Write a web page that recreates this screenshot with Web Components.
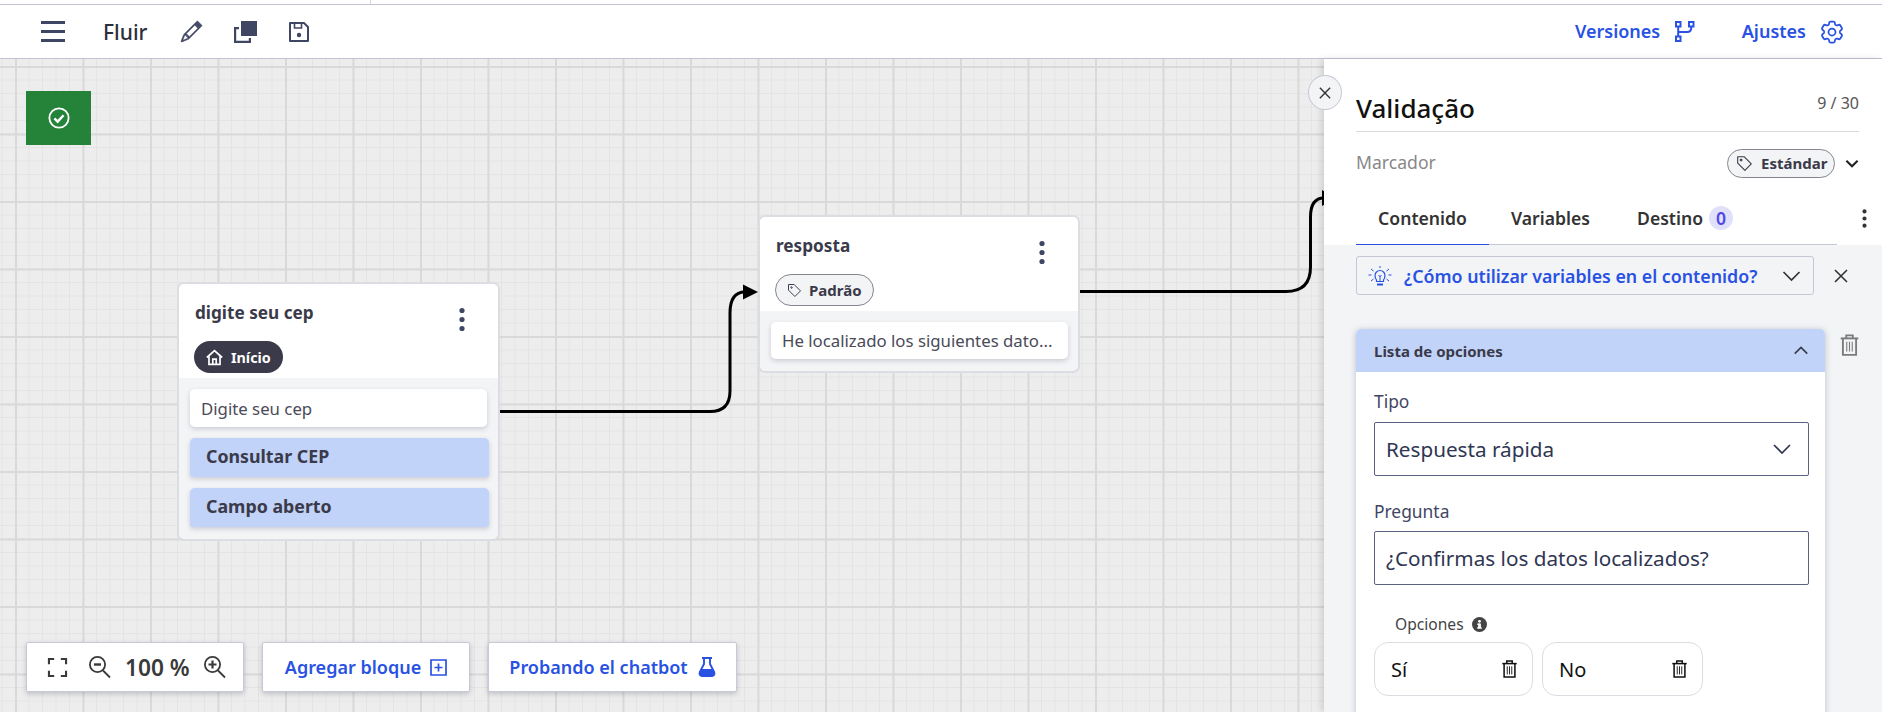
<!DOCTYPE html>
<html lang="es">
<head>
<meta charset="utf-8">
<title>Fluir</title>
<style>
    html, body { margin: 0; height: 100%; overflow: hidden; }
    body { font-family: "Noto Sans", "Liberation Sans", sans-serif; }
</style>
</head>
<body>
<flow-app></flow-app>

<script>
const ICONS = {
    pencil: `<svg viewBox="0 0 16 16" fill="currentColor" stroke="currentColor" stroke-width=".35"><path d="M12.146.146a.5.5 0 0 1 .708 0l3 3a.5.5 0 0 1 0 .708l-10 10a.5.5 0 0 1-.168.11l-5 2a.5.5 0 0 1-.65-.65l2-5a.5.5 0 0 1 .11-.168l10-10zM11.207 2.5 13.5 4.793 14.793 3.5 12.5 1.207 11.207 2.5zm1.586 3L10.5 3.207 4 9.707V10h.5a.5.5 0 0 1 .5.5v.5h.5a.5.5 0 0 1 .5.5v.5h.293l6.5-6.5zm-9.761 5.175-.106.106-1.528 3.821 3.821-1.528.106-.106A.5.5 0 0 1 5 12.5V12h-.5a.5.5 0 0 1-.5-.5V11h-.5a.5.5 0 0 1-.468-.325z"/><path d="M11.200 2.500 12.500 1.200 14.800 3.500 13.500 4.800z"/></svg>`,
    copy: `<svg viewBox="0 0 23 22" fill="currentColor"><path d="M7 0h16v15H7z"/><path d="M0 6h5v2.200H2.200v11.600h12.600V17H17v5H0z"/></svg>`,
    save: `<svg viewBox="0 0 20 20" fill="none" stroke="currentColor" stroke-width="2"><path d="M1 1h14l4 4v14H1z" stroke-linejoin="round"/><path d="M5.500 1v5h7V1" stroke-width="1.600"/><circle cx="10" cy="13" r="2.200" fill="currentColor" stroke="none"/></svg>`,
    branch: `<svg viewBox="0 0 19.500 21" fill="none" stroke="currentColor" stroke-width="2"><rect x="1" y="1" width="4.500" height="4.500"/><rect x="14" y="1" width="4.500" height="4.500"/><rect x="1" y="15.500" width="4.500" height="4.500"/><path d="M3.200 5.500v10M16.200 5.500v1.500q0 4-4 4H3.200"/></svg>`,
    gear: `<svg viewBox="0 0 24 24" fill="none" stroke="currentColor" stroke-width="1.500"><path d="M9.594 3.940c.09-.542.56-.94 1.110-.94h2.593c.55 0 1.020.398 1.110.94l.213 1.281c.063.374.313.686.645.870.074.040.147.083.22.127.324.196.72.257 1.075.124l1.217-.456a1.125 1.125 0 011.370.49l1.296 2.247a1.125 1.125 0 01-.26 1.431l-1.003.827c-.293.24-.438.613-.431.992a6.759 6.759 0 010 .255c-.007.378.138.75.43.99l1.005.828c.424.35.534.954.26 1.430l-1.298 2.247a1.125 1.125 0 01-1.369.491l-1.217-.456c-.355-.133-.75-.072-1.076.124a6.570 6.570 0 01-.22.128c-.331.183-.581.495-.644.869l-.213 1.280c-.09.543-.56.941-1.110.941h-2.594c-.55 0-1.020-.398-1.110-.94l-.213-1.281c-.062-.374-.312-.686-.644-.87a6.520 6.520 0 01-.22-.127c-.325-.196-.72-.257-1.076-.124l-1.217.456a1.125 1.125 0 01-1.369-.49l-1.297-2.247a1.125 1.125 0 01.26-1.431l1.004-.827c.292-.24.437-.613.43-.992a6.932 6.932 0 010-.255c.007-.378-.138-.75-.43-.99l-1.004-.828a1.125 1.125 0 01-.26-1.430l1.297-2.247a1.125 1.125 0 011.370-.491l1.216.456c.356.133.751.072 1.076-.124.072-.044.146-.087.22-.128.332-.183.582-.495.644-.869l.214-1.281z"/><circle cx="12" cy="12" r="3"/></svg>`,
    check: `<svg viewBox="0 0 24 24" fill="none" stroke="currentColor"><circle cx="12" cy="12" r="10.500" stroke-width="2"/><path d="M7 12.500l3.500 3.500L17 9" stroke-width="2.600"/></svg>`,
    dots: `<svg viewBox="0 0 6 24" fill="currentColor"><circle cx="3" cy="3" r="2.600"/><circle cx="3" cy="12" r="2.600"/><circle cx="3" cy="21" r="2.600"/></svg>`,
    home: `<svg viewBox="0 0 20 20" fill="none" stroke="currentColor" stroke-width="2"><path d="M1 10 10 2l9 8"/><path d="M3.500 8.500V18h13V8.500"/><path d="M8 18v-6h4v6"/></svg>`,
    tag: `<svg viewBox="0 0 20 20" fill="none" stroke="currentColor" stroke-width="1.300"><path d="M2 2h7.500l8.500 8.500-7.500 7.500L2 9.500z" stroke-linejoin="round"/><circle cx="6" cy="6" r="1"/></svg>`,
    fit: `<svg viewBox="0 0 20 20" fill="none" stroke="currentColor" stroke-width="2.200"><path d="M1 6.500V1h5.500M13.500 1H19v5.500M19 13.500V19h-5.500M6.500 19H1v-5.500"/></svg>`,
    zoomOut: `<svg viewBox="0 0 22 22" fill="none" stroke="currentColor" stroke-width="1.800"><circle cx="8.500" cy="8.500" r="7.600"/><path d="M14 14.500l7 7"/><path d="M5 8.500h7" stroke-width="2.400"/></svg>`,
    zoomIn: `<svg viewBox="0 0 22 22" fill="none" stroke="currentColor" stroke-width="1.800"><circle cx="8.500" cy="8.500" r="7.600"/><path d="M14 14.500l7 7"/><path d="M4.500 8.500h8M8.500 4.500v8" stroke-width="2.200"/></svg>`,
    plusBox: `<svg viewBox="0 0 17 17" fill="none" stroke="currentColor" stroke-width="1.700"><path d="M1 1h15v15H1z"/><path d="M8.500 4.500v8M4.500 8.500h8"/></svg>`,
    flask: `<svg viewBox="0 0 18 20" fill="none" stroke="currentColor" stroke-width="1.900"><path d="M4 1h10M6 1v6L1.800 15q-1 3.800 2.700 4h9q3.700-.2 2.700-4L12 7V1"/><path d="M3 12h12l2 4-2 3.500H3L1 16z" fill="currentColor" stroke="none"/></svg>`,
    close: `<svg viewBox="0 0 14 14" fill="none" stroke="currentColor" stroke-width="1.600"><path d="M1 1l12 12M13 1 1 13"/></svg>`,
    down: `<svg viewBox="0 0 18 10" fill="none" stroke="currentColor" style="stroke-width:var(--sw,1.700)"><path d="M1 1l8 8 8-8"/></svg>`,
    up: `<svg viewBox="0 0 18 10" fill="none" stroke="currentColor" stroke-width="2.200"><path d="M1 9l8-8 8 8"/></svg>`,
    bulb: `<svg viewBox="0 0 24 20" fill="none" stroke="currentColor" stroke-width="1.200"><path d="M8.500 14Q7 12 7 9.500a5 5 0 0 1 10 0q0 2.500-1.500 4.500v1.500h-7z"/><path d="M9 18.500h6" stroke-width="2"/><path d="M12 10v5M10.500 9 12 10.500 13.500 9M.5 9h3M20.500 9h3M3 3l2.500 2M21 3l-2.500 2M3 15l2.500-2M21 15l-2.500-2M12 0v2" stroke-width="1"/></svg>`,
    trash: `<svg viewBox="0 0 16 20" fill="none" stroke="currentColor" stroke-width="1.700"><path d="M0 4h16"/><path d="M5 4V1.200h6V4"/><path d="M2 4v15h12V4"/><path d="M5.500 7v9M8 7v9M10.500 7v9" stroke-width="1"/></svg>`,
    info: `<svg viewBox="0 0 16 16"><circle cx="8" cy="8" r="8" fill="currentColor"/><rect x="6.500" y="7" width="3" height="5" fill="#fff"/><rect x="5.500" y="11" width="5" height="1.500" fill="#fff"/><rect x="5.500" y="7" width="3" height="1.300" fill="#fff"/><circle cx="8" cy="4.600" r="1.500" fill="#fff"/></svg>`
};


class AppIcon extends HTMLElement {
    constructor() {
        super();
        this.attachShadow({ mode: 'open' }).innerHTML = `
            <style>
                :host { display: inline-flex; flex: none; width: var(--w, 20px); height: var(--h, 20px); }
                svg { display: block; width: 100%; height: 100%; overflow: visible; }
            </style>
            ${ICONS[this.getAttribute('name')] || ''}
        `;
    }
}


class AppHeader extends HTMLElement {
    constructor() {
        super();
        this.attachShadow({ mode: 'open' }).innerHTML = `
            <style>
                :host {
                    display: flex;
                    align-items: center;
                    height: 53px;
                    padding: 0 36px 0 41px;
                    background: #fff;
                    border-bottom: 1px solid #c3c3d6;
                    color: #3f4663;
                }

                .burger { display: flex; flex-direction: column; gap: 6.500px; width: 24px; margin-right: 38px; }
                .burger i { height: 2.500px; background: currentColor; }
                .name { font-size: 21px; font-weight: 500; color: #2b2f3a; margin-right: 34px; width: 44px; }
                .tools { display: flex; align-items: center; gap: 32px; }
                .right { margin-left: auto; display: flex; align-items: center; color: #2952e3; font-size: 18px; font-weight: 600; }
                .right span { padding-bottom: 2px; }
                .right .a { margin-right: 15px; }
                .right .b { margin: 0 12px 0 47px; }
            </style>
            <div class="burger"><i></i><i></i><i></i></div>
            <span class="name">Fluir</span>
            <div class="tools">
                <app-icon name="pencil" style="--w:21px;--h:21px"></app-icon>
                <app-icon name="copy" style="--w:23px;--h:22px"></app-icon>
                <app-icon name="save" style="--w:20px;--h:20px"></app-icon>
            </div>
            <div class="right">
                <span class="a">Versiones</span><app-icon name="branch" style="--w:19.500px;--h:21px"></app-icon>
                <span class="b">Ajustes</span><app-icon name="gear" style="--w:28px;--h:28px"></app-icon>
            </div>
        `;
    }
}


class FlowNode extends HTMLElement {
    constructor() {
        super();
        this.attachShadow({ mode: 'open' }).innerHTML = `
            <style>
                :host {
                    position: absolute;
                    box-sizing: border-box;
                    background: #f3f4f6;
                    border: 2px solid #dcdde3;
                    border-radius: 7px;
                    color: #3a3a4a;
                }

                .top { background: #fff; border-radius: 5px 5px 0 0; box-sizing: border-box; padding: 17px 16px 0; position: relative; height: 94px; }
                .title { font-size: 17.200px; font-weight: 700; line-height: 24px; }
                .dots { position: absolute; top: 22px; right: 33px; color: #3f4663; }
                .badge { position: absolute; left: 15px; top: 57px; }
                .body { display: flex; flex-direction: column; gap: 11px; padding: 11px 11px 12px; }
            </style>
            <div class="top">
                <div class="title"></div>
                <app-icon class="dots" name="dots" style="--w:6px;--h:27px"></app-icon>
                <div class="badge"><slot name="badge"></slot></div>
            </div>
            <div class="body"><slot></slot></div>
        `;
        this.shadowRoot.querySelector('.title').textContent = this.getAttribute('title-text');
    }
}


class NodeBadge extends HTMLElement {
    constructor() {
        super();
        this.attachShadow({ mode: 'open' }).innerHTML = `
            <style>
                :host {
                    display: inline-flex;
                    align-items: center;
                    gap: 7px;
                    box-sizing: border-box;
                    height: 32px;
                    padding: 0 11px;
                    border-radius: 16px;
                    font-size: 15px;
                    font-weight: 700;
                    color: #3a3a4a;
                    background: #f3f4f6;
                    border: 1px solid #85858f;
                }

                :host([dark]) { background: #3a3a4a; color: #fff; border: 0; font-size: 14.300px; gap: 8px; padding: 0 12px; }
            </style>
            <app-icon name="${this.getAttribute('icon')}" style="--w:${this.hasAttribute('dark') ? 17 : 15}px;--h:${this.hasAttribute('dark') ? 17 : 15}px"></app-icon>
            <slot></slot>
        `;
    }
}


class NodeRow extends HTMLElement {
    constructor() {
        super();
        this.attachShadow({ mode: 'open' }).innerHTML = `
            <style>
                :host {
                    display: flex;
                    align-items: center;
                    box-sizing: border-box;
                    width: 297px;
                    height: 38px;
                    padding: 0 11px;
                    background: #fff;
                    border-radius: 5px;
                    box-shadow: 0 2px 5px rgba(60, 64, 90, .22);
                    font-size: 16.800px;
                    color: #4a4a58;
                    white-space: nowrap;
                }

                :host([short]) { height: 37px; }

                :host([option]) {
                    height: 39px;
                    width: 299px;
                    padding: 0 16px 4px;
                    background: #c1d3f8;
                    font-size: 17.800px;
                    font-weight: 700;
                    color: #3a3a4a;
                    border-radius: 5px 5px 3px 3px;
                }
            </style>
            <slot></slot>
        `;
    }
}


class ToolCard extends HTMLElement {
    constructor() {
        super();
        this.attachShadow({ mode: 'open' }).innerHTML = `
            <style>
                :host {
                    display: flex;
                    align-items: center;
                    justify-content: center;
                    box-sizing: border-box;
                    height: 50px;
                    background: #fff;
                    border: 1px solid #c8c9d6;
                    border-radius: 2px;
                    box-shadow: 0 2px 5px rgba(60, 64, 90, .25);
                    color: #2952e3;
                    font-size: 18px;
                    font-weight: 600;
                    gap: 9px;
                }
            </style>
            <slot></slot>
        `;
    }
}


class FlowCanvas extends HTMLElement {
    constructor() {
        super();
        this.attachShadow({ mode: 'open' }).innerHTML = `
            <style>
                :host {
                    display: block;
                    position: relative;
                    flex: 1;
                    overflow: hidden;
                    background-color: #ededed;
                    background-image:
                        linear-gradient(#d9d9d9 2px, transparent 2px),
                        linear-gradient(90deg, #d9d9d9 2px, transparent 2px),
                        linear-gradient(#e4e4e4 1px, transparent 1px),
                        linear-gradient(90deg, #e4e4e4 1px, transparent 1px);
                    background-size: 67.500px 67.500px, 67.500px 67.500px, 13.500px 13.500px, 13.500px 13.500px;
                    background-position: 0 7px, 15px 0, 0 7px, 15px 0;
                }

                .status {
                    position: absolute;
                    left: 26px;
                    top: 32px;
                    width: 65px;
                    height: 54px;
                    display: flex;
                    align-items: center;
                    justify-content: center;
                    background: #248338;
                    color: #fff;
                }

                svg.wires { position: absolute; inset: 0; width: 100%; height: 100%; }

                .controls {
                    position: absolute;
                    left: 26px;
                    top: 583px;
                    display: flex;
                    gap: 18px;
                    color: #3a3a3a;
                }

                .zoom { width: 218px; color: #3a3a3a; font-size: 22.700px; gap: 0; justify-content: flex-start; padding-left: 21px; }
                .zoom b { font-weight: 600; margin: 0 14px; }
                .zoom app-icon:first-child { margin-right: 22px; }
                .add { width: 208px; }
                .test { width: 249px; gap: 10px; }
            </style>
            <div class="status"><app-icon name="check" style="--w:22px;--h:22px"></app-icon></div>
            <svg class="wires" fill="none" stroke="#000" stroke-width="3">
                <path d="M500 352.500H710Q730 352.500 730 332V254Q730 233 745 233"/>
                <path d="M743 225.500 758 233 743 240.500z" fill="#000" stroke="none"/>
                <path d="M1080 232.500H1286Q1310.500 232.500 1310.500 208V158Q1310.500 139 1324 139"/>
                <path d="M1322 131 1336 139 1322 147z" fill="#000" stroke="none"/>
            </svg>
            <slot></slot>
            <div class="controls">
                <tool-card class="zoom">
                    <app-icon name="fit" style="--w:19px;--h:19px"></app-icon>
                    <app-icon name="zoomOut" style="--w:22px;--h:22px"></app-icon>
                    <b>100 %</b>
                    <app-icon name="zoomIn" style="--w:22px;--h:22px"></app-icon>
                </tool-card>
                <tool-card class="add">Agregar bloque <app-icon name="plusBox" style="--w:17px;--h:17px"></app-icon></tool-card>
                <tool-card class="test">Probando el chatbot <app-icon name="flask" style="--w:18px;--h:20px"></app-icon></tool-card>
            </div>
        `;
    }
}


class FormField extends HTMLElement {
    constructor() {
        super();
        const isSelect = this.hasAttribute('select');
        this.attachShadow({ mode: 'open' }).innerHTML = `
            <style>
                :host { display: block; color: #3f4663; }
                .label { font-size: 17.400px; line-height: 24px; margin-bottom: 8px; }
                :host([select]) .label { margin-bottom: 9px; }
                .box {
                    display: flex;
                    align-items: center;
                    justify-content: space-between;
                    box-sizing: border-box;
                    height: 54px;
                    padding: 0 17px 0 11px;
                    border: 1px solid #5b6180;
                    border-radius: 2px;
                    font-size: 20.700px;
                    color: #2f3653;
                }
            </style>
            <div class="label"></div>
            <div class="box">
                <span><slot></slot></span>
                ${isSelect ? '<app-icon name="down" style="--w:18px;--h:10px"></app-icon>' : ''}
            </div>
        `;
        this.shadowRoot.querySelector('.label').textContent = this.getAttribute('label');
    }
}


class OptionChip extends HTMLElement {
    constructor() {
        super();
        this.attachShadow({ mode: 'open' }).innerHTML = `
            <style>
                :host {
                    display: flex;
                    align-items: center;
                    justify-content: space-between;
                    box-sizing: border-box;
                    width: 159px;
                    height: 54px;
                    padding: 0 15px 0 16px;
                    border: 1px solid #dcdde3;
                    border-radius: 14px;
                    font-size: 20px;
                    color: #111;
                }
            </style>
            <span><slot></slot></span>
            <app-icon name="trash" style="--w:15px;--h:18px"></app-icon>
        `;
    }
}


class SidePanel extends HTMLElement {
    constructor() {
        super();
        this.attachShadow({ mode: 'open' }).innerHTML = `
            <style>
                :host {
                    display: block;
                    position: relative;
                    flex: none;
                    width: 558px;
                    background: #f3f4f6;
                    box-shadow: -3px 0 6px rgba(0, 0, 0, .12);
                    color: #333;
                }

                .closer {
                    position: absolute;
                    left: -16px;
                    top: 16px;
                    box-sizing: border-box;
                    width: 34px;
                    height: 35px;
                    display: flex;
                    align-items: center;
                    justify-content: center;
                    background: #f3f4f6;
                    border: 1px solid #c5c8d4;
                    border-radius: 50%;
                    color: #333;
                    z-index: 2;
                }

                .head { background: #fff; height: 186px; padding: 0 23px 0 32px; position: relative; }
                .title-row {
                    display: flex;
                    justify-content: space-between;
                    height: 73px;
                    box-sizing: border-box;
                    padding-top: 29px;
                    border-bottom: 1px solid #d8d9de;
                }

                .title { font-size: 26px; line-height: 40px; font-weight: 500; color: #111; }
                .count { font-size: 16px; line-height: 30px; color: #555; }
                .marker { display: flex; align-items: center; height: 62px; font-size: 17.600px; color: #888; }
                .marker span { margin-right: auto; padding-bottom: 2px; }
                .chip {
                    display: flex;
                    align-items: center;
                    gap: 8px;
                    box-sizing: border-box;
                    width: 108px;
                    height: 29px;
                    padding: 0 8px;
                    border: 1px solid #85858f;
                    border-radius: 15px;
                    background: #f3f4f6;
                    color: #3a3a4a;
                    font-size: 15px;
                    font-weight: 700;
                    margin-right: 10px;
                }

                .tabs {
                    position: absolute;
                    left: 32px;
                    right: 45px;
                    bottom: 0;
                    height: 52px;
                    display: flex;
                    align-items: center;
                    border-bottom: 1px solid #c5c8d4;
                    font-size: 17.600px;
                    font-weight: 600;
                    color: #333;
                }

                .tab { box-sizing: border-box; height: 52px; display: flex; align-items: center; gap: 6px; }
                .tab.on { width: 133px; justify-content: center; position: relative; }
                .tab.on::after { content: ''; position: absolute; left: 0; right: 0; bottom: -1px; height: 1px; background: #2952e3; }
                .tab.v { margin-left: 22px; width: 82px; }
                .tab.d { margin-left: 44px; }
                .count-badge {
                    width: 24px;
                    height: 24px;
                    border-radius: 50%;
                    background: #e0e0fb;
                    color: #4f46e5;
                    display: flex;
                    align-items: center;
                    justify-content: center;
                }

                .kebab { position: absolute; right: 15px; top: 150px; color: #333; }

                .hint-row { display: flex; align-items: center; margin: 11px 0 0 32px; }
                .hint {
                    display: flex;
                    align-items: center;
                    box-sizing: border-box;
                    width: 458px;
                    height: 39px;
                    padding: 0 12px 0 11px;
                    border: 1px solid #c5c8d4;
                    border-radius: 3px;
                    color: #2952e3;
                    font-size: 17.800px;
                    font-weight: 600;
                    gap: 12px;
                }

                .hint span { flex: 1; white-space: nowrap; }
                .hint-row > app-icon { margin-left: 20px; }

                .card-row { display: flex; align-items: flex-start; margin: 34px 0 0 32px; gap: 15px; }
                .card {
                    width: 469px;
                    height: 400px;
                    background: #fff;
                    border-radius: 5px 5px 0 0;
                    box-shadow: 0 1px 6px rgba(60, 64, 90, .3);
                }

                .card-head {
                    display: flex;
                    align-items: center;
                    justify-content: space-between;
                    height: 43px;
                    padding: 0 17px 0 18px;
                    background: #c1d3f8;
                    border-radius: 5px 5px 0 0;
                    font-size: 15px;
                    font-weight: 700;
                    color: #3a3a4a;
                }

                .card-body { display: flex; flex-direction: column; padding: 17px 16px 0 18px; }
                .card-body form-field + form-field { margin-top: 23px; }
                .options-label { display: flex; align-items: center; gap: 8px; height: 20px; margin: 29px 0 8px 21px; font-size: 15.600px; color: #444; }
                .options { display: flex; gap: 9px; }
                .card-row > app-icon { margin-top: 5px; color: #7b7b7b; }
            </style>
            <div class="closer"><app-icon name="close" style="--w:12px;--h:12px"></app-icon></div>
            <div class="head">
                <div class="title-row"><span class="title">Validação</span><span class="count">9 / 30</span></div>
                <div class="marker">
                    <span>Marcador</span>
                    <div class="chip"><app-icon name="tag" style="--w:17px;--h:17px"></app-icon>Estándar</div>
                    <app-icon name="down" style="--w:14px;--h:7px;--sw:3;color:#222"></app-icon>
                </div>
                <div class="tabs">
                    <div class="tab on">Contenido</div>
                    <div class="tab v">Variables</div>
                    <div class="tab d">Destino <span class="count-badge">0</span></div>
                </div>
                <app-icon class="kebab" name="dots" style="--w:5px;--h:19px"></app-icon>
            </div>
            <div class="hint-row">
                <div class="hint">
                    <app-icon name="bulb" style="--w:24px;--h:20px"></app-icon>
                    <span>¿Cómo utilizar variables en el contenido?</span>
                    <app-icon name="down" style="--w:19px;--h:10px;color:#333"></app-icon>
                </div>
                <app-icon name="close" style="--w:14px;--h:14px"></app-icon>
            </div>
            <div class="card-row">
                <div class="card">
                    <div class="card-head">Lista de opciones <app-icon name="up" style="--w:14px;--h:9px"></app-icon></div>
                    <div class="card-body">
                        <form-field label="Tipo" select>Respuesta rápida</form-field>
                        <form-field label="Pregunta">¿Confirmas los datos localizados?</form-field>
                        <div class="options-label">Opciones <app-icon name="info" style="--w:15px;--h:15px"></app-icon></div>
                        <div class="options">
                            <option-chip>Sí</option-chip>
                            <option-chip style="width:161px">No</option-chip>
                        </div>
                    </div>
                </div>
                <app-icon name="trash" style="--w:19px;--h:22px"></app-icon>
            </div>
        `;
    }
}


class FlowApp extends HTMLElement {
    constructor() {
        super();
        this.attachShadow({ mode: 'open' }).innerHTML = `
            <style>
                :host {
                    display: flex;
                    flex-direction: column;
                    height: 712px;
                    background: #fff;
                    overflow: hidden;
                }

                .strip {
                    flex: none;
                    box-sizing: border-box;
                    height: 5px;
                    border-bottom: 1px solid #c3c3d6;
                    padding-left: 370px;
                }

                .strip i { display: block; width: 1px; height: 4px; background: #d8d8e0; }
                .work { flex: 1; display: flex; min-height: 0; }
                flow-node.first { left: 177px; top: 223px; width: 323px; }
                flow-node.second { left: 758px; top: 156px; width: 322px; }
            </style>
            <div class="strip"><i></i></div>
            <app-header></app-header>
            <div class="work">
                <flow-canvas>
                    <flow-node class="first" title-text="digite seu cep">
                        <node-badge slot="badge" icon="home" dark>Início</node-badge>
                        <node-row>Digite seu cep</node-row>
                        <node-row option>Consultar CEP</node-row>
                        <node-row option>Campo aberto</node-row>
                    </flow-node>
                    <flow-node class="second" title-text="resposta">
                        <node-badge slot="badge" icon="tag">Padrão</node-badge>
                        <node-row short>He localizado los siguientes dato...</node-row>
                    </flow-node>
                </flow-canvas>
                <side-panel></side-panel>
            </div>
        `;
    }
}


customElements.define('app-icon', AppIcon);
customElements.define('app-header', AppHeader);
customElements.define('node-badge', NodeBadge);
customElements.define('node-row', NodeRow);
customElements.define('flow-node', FlowNode);
customElements.define('tool-card', ToolCard);
customElements.define('flow-canvas', FlowCanvas);
customElements.define('form-field', FormField);
customElements.define('option-chip', OptionChip);
customElements.define('side-panel', SidePanel);
customElements.define('flow-app', FlowApp);
</script>
</body>
</html>
